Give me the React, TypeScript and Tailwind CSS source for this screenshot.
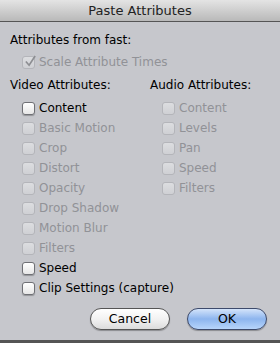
const Box = ({ on, dim }: { on?: boolean; dim?: boolean }) => (
  <span
    className={
      "relative inline-block w-[13px] h-[13px] rounded-[3px] border shrink-0 " +
      (dim
        ? "border-[#b4b5ba] bg-gradient-to-b from-[#dcdde0] to-[#cfd0d4]"
        : "border-[#6f7075] bg-gradient-to-b from-white to-[#e6e6e6] shadow-[0_1px_1px_rgba(0,0,0,0.25)]")
    }
  >
    {on && (
      <svg viewBox="0 0 14 14" className="absolute left-[1px] -top-[2px] w-[13px] h-[13px]">
        <path d="M2 7 L5.5 11 L12 1" fill="none" stroke="#8d8e92" strokeWidth="1.8" />
      </svg>
    )}
  </span>
);

const Item = ({ label, dim, on }: { label: string; dim?: boolean; on?: boolean }) => (
  <div className="flex items-center h-[20px] gap-[4px] whitespace-nowrap">
    <Box dim={dim} on={on} />
    <span className={dim ? "text-[#919297]" : "text-black"}>{label}</span>
  </div>
);

const video = [
  { label: "Content" },
  { label: "Basic Motion", dim: true },
  { label: "Crop", dim: true },
  { label: "Distort", dim: true },
  { label: "Opacity", dim: true },
  { label: "Drop Shadow", dim: true },
  { label: "Motion Blur", dim: true },
  { label: "Filters", dim: true },
  { label: "Speed" },
  { label: "Clip Settings (capture)" },
];

const audio = ["Content", "Levels", "Pan", "Speed", "Filters"];

export default function App() {
  return (
    <div className="w-[280px] h-[343px] flex flex-col bg-[#c6c7cc] text-[12px] font-['DejaVu_Sans',sans-serif] leading-none">
      <div className="h-[22px] flex items-center justify-center bg-gradient-to-b from-[#e4e4e4] to-[#b9b9b9] border-b border-[#555] text-[#222] text-[13px]">
        Paste Attributes
      </div>
      <div className="flex-1 flex flex-col px-[10px] pt-[10px]">
        <div className="h-[16px] flex items-center">Attributes from fast:</div>
        <div className="pl-[12px] mt-[4px]">
          <Item label="Scale Attribute Times" dim on />
        </div>
        <div className="flex mt-[4px]">
          <div className="w-[140px] shrink-0">
            <div className="h-[18px] flex items-center">Video Attributes:</div>
            <div className="pl-[12px] mt-[4px]">
              {video.map((v) => (
                <Item key={v.label} label={v.label} dim={v.dim} />
              ))}
            </div>
          </div>
          <div>
            <div className="h-[18px] flex items-center">Audio Attributes:</div>
            <div className="pl-[12px] mt-[4px]">
              {audio.map((a) => (
                <Item key={a} label={a} dim />
              ))}
            </div>
          </div>
        </div>
        <div className="flex justify-end gap-[17px] mt-[10px] pr-[3px]">
          <button className="w-[80px] h-[22px] rounded-full border border-[#555] bg-gradient-to-b from-white via-[#f2f2f2] to-[#dcdcdc] text-black text-[12.5px] shadow-[0_1px_1px_rgba(0,0,0,0.3)]">
            Cancel
          </button>
          <button className="w-[80px] h-[22px] rounded-full border border-[#3d4a6b] bg-gradient-to-b from-[#d4e4fa] via-[#8db5ee] to-[#b7d5fb] text-black text-[12.5px] shadow-[0_1px_1px_rgba(0,0,0,0.3)]">
            OK
          </button>
        </div>
      </div>
      <div className="h-[3px] bg-[#555]" />
    </div>
  );
}
